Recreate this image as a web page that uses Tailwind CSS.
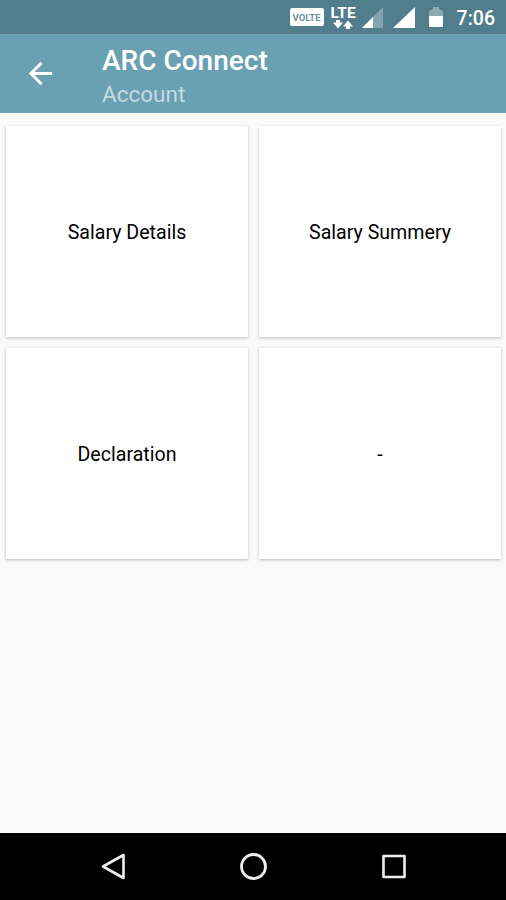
<!DOCTYPE html>
<html lang="en">
<head>
  <meta charset="UTF-8">
  <meta name="viewport" content="width=device-width, initial-scale=1.0">
  <title>ARC Connect</title>
  <script src="https://cdn.jsdelivr.net/npm/@tailwindcss/browser@4"></script>
</head>
<body class="h-[900px] flex flex-col overflow-hidden bg-[#fafafa] font-['Roboto',sans-serif]">

  <!-- Status bar -->
  <div class="h-[34px] shrink-0 flex items-center justify-end bg-[#527d8d] pr-[11px] text-white">
    <div class="w-[34px] h-[18px] mr-[7px] flex items-center justify-center rounded-[2px] bg-white pt-px text-[9.5px] leading-none font-bold text-[#6d8f9c]">VOLTE</div>
    <div class="w-[25px] h-[22px] mr-[6px] mt-[2px] flex flex-col items-center">
      <span class="text-[15.5px] leading-[13px] font-bold">LTE</span>
      <svg class="w-[20px] h-[9px] shrink-0" viewBox="0 0 20 9" fill="currentColor">
        <path d="M3 0h4v2.5h3L5 8.500 0 2.500h3z"/>
        <path d="M13 9h4V6.500h3L15 .5l-5 6h3z"/>
      </svg>
    </div>
    <svg class="w-[21px] h-[21px] mr-[10px]" viewBox="0 0 21 21" fill="currentColor">
      <path opacity=".3" d="M21 0v21H0z"/>
      <path d="M11 10v11H0z"/>
    </svg>
    <svg class="w-[22px] h-[21px] mr-[14px]" viewBox="0 0 22 21" fill="currentColor">
      <path d="M22 0v21H0z"/>
    </svg>
    <svg class="w-[14px] h-[20px] mr-[14px]" viewBox="0 0 14 20" fill="currentColor">
      <path opacity=".35" d="M0 9V4l4-2V0h6v2l4 2v5z"/>
      <path d="M0 9h14v10q0 1-1 1H1q-1 0-1-1z"/>
    </svg>
    <span class="text-[19.5px] leading-none font-medium mt-[3px]">7:06</span>
  </div>

  <!-- Toolbar -->
  <header class="h-[79px] shrink-0 flex items-center bg-[#69a1b3] pl-[23px]">
    <button class="mr-[43px]" aria-label="Back">
      <svg class="w-[35px] h-[35px] text-white" viewBox="0 0 24 24" fill="currentColor">
        <path d="M20 11H7.83l5.59-5.59L12 4l-8 8 8 8 1.41-1.41L7.83 13H20v-2z"/>
      </svg>
    </button>
    <div class="pt-[7px] pl-px">
      <h1 class="text-[28px] leading-[34px] font-medium text-white">ARC Connect</h1>
      <p class="text-[22.5px] leading-[33px] text-[#c3dce4]">Account</p>
    </div>
  </header>

  <!-- Menu cards -->
  <main class="flex-1 grid grid-cols-[242px_242px] auto-rows-[211px] gap-[11px] content-start pt-[13px] pl-[6px] text-[19.6px] text-black">
    <div class="flex items-center justify-center bg-white pt-[3px] shadow-[0_1px_3px_rgba(0,0,0,0.25)]">Salary Details</div>
    <div class="flex items-center justify-center bg-white pt-[3px] shadow-[0_1px_3px_rgba(0,0,0,0.25)]">Salary Summery</div>
    <div class="flex items-center justify-center bg-white pt-[3px] shadow-[0_1px_3px_rgba(0,0,0,0.25)]">Declaration</div>
    <div class="flex items-center justify-center bg-white pt-[3px] shadow-[0_1px_3px_rgba(0,0,0,0.25)]">-</div>
  </main>

  <!-- Navigation bar -->
  <nav class="h-[67px] shrink-0 flex items-center justify-between bg-black pl-[101px] pr-[99px]">
    <svg class="w-[24px] h-[28px]" viewBox="0 0 24 28" fill="none" stroke="#eee" stroke-width="2.6" stroke-linejoin="round">
      <path d="M22.5 2v23L2 13.5z"/>
    </svg>
    <svg class="w-[28px] h-[28px]" viewBox="0 0 28 28" fill="none" stroke="#eee" stroke-width="2.8">
      <circle cx="13.5" cy="13.5" r="12"/>
    </svg>
    <svg class="w-[25px] h-[25px]" viewBox="0 0 25 25" fill="none" stroke="#eee" stroke-width="2.6" stroke-linejoin="round">
      <path d="M1.5 2h21v21h-21z"/>
    </svg>
  </nav>

</body>
</html>
